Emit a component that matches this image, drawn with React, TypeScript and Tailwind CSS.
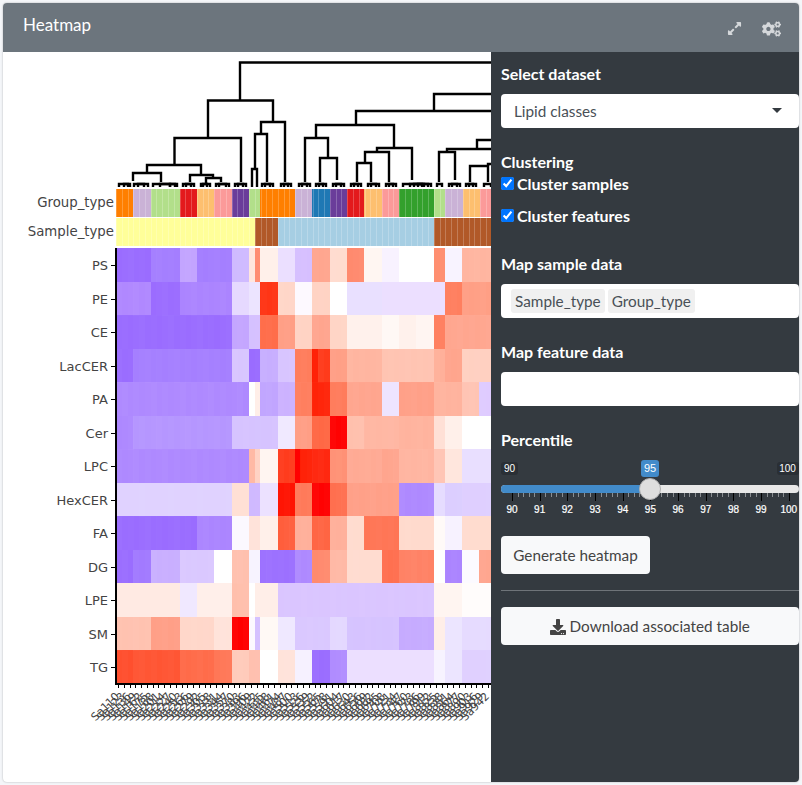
import { FaCogs, FaDownload, FaExpandAlt } from "react-icons/fa";

const HEAT_LEFT = 116;
const HEAT_RIGHT = 491;
const COL = 5.78;
const ROW_TOP = 248;
const ROW_H = 33.5;

// "end:colour" runs per row, x in page pixels
const rows: [string, string][] = [
  ["PS", "151:9a6cff 180:a47eff 197:c3a4ff 232:a47eff 249:cfbaff 255:ffe6de 260:ff8a70 278:fff0ea 295:ebdfff 312:d6bfff 330:ffa68f 347:ffdccf 364:ff8a6e 382:fff6f2 399:f8f2ff 434:ffffff 445:ff8f70 462:f8f3ff 491:ffb5a0"],
  ["PE", "151:b088ff 180:9b6cff 232:ab84ff 249:e6d9ff 260:ece4ff 278:ff3515 295:ffd6c8 312:fdf9ff 330:ffd3c4 347:ffffff 382:e9e0ff 445:ecdfff 462:ff7e5e 491:ff9f85"],
  ["CE", "232:9a6cff 249:c4a6ff 260:d5c0ff 278:ff6d4a 295:ff9e85 312:ffd3c4 330:ffa58e 347:ffd5c6 382:fff1ec 399:fff8f5 416:fff1ec 434:fff5f2 445:ff7f5f 491:ffa68f"],
  ["LacCER", "133:9a6cff 232:a57fff 249:d8c5ff 260:9a6cff 278:c7aeff 295:d8c5ff 312:ff7d5c 318:ff1f05 330:ff3a1a 347:ff9f86 382:ffb5a0 434:ffc4b2 445:ffb09a 462:ffa58d 491:ffd0c1"],
  ["PA", "249:ae89ff 255:ffffff 260:ffeee8 278:c1a5ff 295:ccb2ff 312:ff7e5e 330:ff2308 347:ff7c5c 382:ffa58e 399:eee4ff 434:ffa088 462:ffb39e 479:ffc4b3 491:dfcbff"],
  ["Cer", "133:ad88ff 232:b596ff 278:d6c3ff 295:f0e9ff 312:ff9e85 330:ff6845 347:ff0000 364:ffc0ad 399:ffb7a3 434:ffb39e 445:ffe0d6 462:fff0ea 491:ffffff"],
  ["LPC", "249:ae89ff 255:ffb8a3 260:ffd2c4 278:fff5f1 295:ff3b1c 300:ff0000 312:ff1f05 330:ff2810 347:ff9175 382:ffaa94 399:ffa58e 434:ffb5a1 445:ffc5b5 462:ffe6dd 491:e9dfff"],
  ["HexCER", "232:e0d2ff 249:ffe0d5 260:cfb8ff 278:ece1ff 295:ff1200 312:ff7a5a 330:ff0000 347:ff6f4f 399:ffa088 434:ae89ff 445:e6dcff 462:dcceff 491:dfcfff"],
  ["FA", "197:9a6cff 232:ab85ff 249:fbf8ff 260:ffe3da 278:fff0ea 295:ff5e3c 312:ffb09b 330:ff6442 347:ffb09b 364:ffdccf 399:ff7555 434:ffdacd 445:fffaf8 462:f7f2ff 491:ffdccf"],
  ["DG", "133:9a6cff 151:a27aff 180:c9afff 214:dac8ff 232:ffffff 249:ffc0ae 260:f7f3ff 295:9c70ff 312:ae89ff 330:ff8a6e 347:ffb9a6 382:ffdcd0 399:ff6f4f 434:ff8265 445:ffffff 462:ab84ff 479:fcfaff 491:ffa68f"],
  ["LPE", "180:ffeae3 197:f0e8ff 232:ffefea 249:ffbfac 255:ffffff 278:ffeee8 434:dac5ff 462:fff5f1 491:fffcfb"],
  ["SM", "151:ffc2b0 180:ff9f87 214:ffd7ca 232:ffe3da 249:ff0000 255:fcf9ff 260:d5c1ff 278:fff9f5 295:efe8ff 330:dac8ff 347:e4d8ff 399:d6c3ff 434:c6abff 445:ffeee8 462:ece5ff 491:e6dbff"],
  ["TG", "133:ff4f2e 180:ff5533 214:ff6b49 232:ff7757 249:ffcbbb 260:ffbfae 278:ffffff 295:ffe3da 312:f6f1ff 330:9a6cff 347:b08cff 434:ecdfff 445:f7f3ff 462:ece5ff 491:e0d0ff"],
];

const groupRuns = "133:ff7f00 151:cab2d6 180:b2df8a 197:e31a1c 214:fdbf6f 232:fb9a99 249:6a3d9a 260:b2df8a 295:ff7f00 312:cab2d6 330:1f78b4 347:6a3d9a 364:e31a1c 382:fdbf6f 399:fb9a99 434:33a02c 445:b2df8a 463:cab2d6 480:fdbf6f 491:fb9a99";
const sampleRuns = "255:ffff99 278:b15928 434:a6cee3 491:b15928";

// [x1, x2, y, leftEnd, rightEnd]
const branches: [number, number, number, number, number][] = [
  [240, 491, 62.5, 100, 62],
  [208, 273, 100.5, 138, 122],
  [174.5, 241, 138, 165, 182],
  [147, 201, 165, 173, 175],
  [133, 161, 173, 181, 182],
  [190, 213, 175, 182, 178],
  [206, 221, 178, 183, 182],
  [261, 285, 122, 134, 182],
  [255, 267, 134, 169, 182],
  [252, 257, 169, 187, 187],
  [434, 491, 94, 111, 94],
  [356, 491, 111, 125, 111],
  [316, 394, 125, 138, 148],
  [305, 328, 138, 182, 158],
  [320, 337, 158, 182, 180],
  [377, 412, 148, 152, 180],
  [365, 389, 152, 163, 182],
  [357, 371, 163, 182, 182],
  [447, 491, 149, 152, 149],
  [439, 455, 152, 182, 180],
  [477, 491, 140, 148, 140],
  [470, 488, 166, 182, 182],
  [488, 491, 164, 166, 164],
];

// small arches sitting right on top of the annotation bars
const arches: [number, number][] = [
  [119, 130], [124, 128], [134, 148], [138, 144], [153, 170], [160, 175], [170, 177],
  [183, 194], [186, 191], [201, 210], [203, 207], [216, 229], [219, 226],
  [235, 246], [238, 243], [262, 273], [265, 270], [281, 291], [284, 288],
  [299, 310], [302, 307], [316, 326], [319, 323], [333, 344], [336, 341],
  [351, 361], [354, 358], [368, 379], [371, 376], [386, 396], [389, 393],
  [403, 431], [410, 428], [414, 424], [418, 422], [437, 442], [449, 460], [452, 457],
  [466, 476], [469, 473], [484, 491],
];

function runs(spec: string, start: number) {
  let x = start;
  return spec.split(" ").map((part) => {
    const [end, colour] = part.split(":");
    const cell = { x, w: Number(end) - x, fill: "#" + colour };
    x = Number(end);
    return cell;
  });
}

const columns = Array.from({ length: 65 }, (_, i) => HEAT_LEFT + i * COL);

function Heatmap() {
  return (
    <svg viewBox="3 52 488 730" className="block w-[488px] h-[730px]" fontFamily="'DejaVu Sans', sans-serif" fontSize="13.3" fill="#444">
      {/* dendrogram */}
      <g fill="none" stroke="#000" strokeWidth="2.4">
        {branches.map(([x1, x2, y, a, b], i) => (
          <path key={i} d={`M${x1} ${a}V${y}H${x2}V${b}`} />
        ))}
        {arches.map(([x1, x2], i) => (
          <path key={i} d={`M${x1} 187V184H${x2}V187`} />
        ))}
      </g>

      {/* annotation bars */}
      <text x="114" y="207" textAnchor="end">Group_type</text>
      <text x="114" y="236" textAnchor="end">Sample_type</text>
      <g shapeRendering="crispEdges">
        {runs(groupRuns, HEAT_LEFT).map((c, i) => (
          <rect key={i} x={c.x} y="189" width={c.w} height="28" fill={c.fill} />
        ))}
        {runs(sampleRuns, HEAT_LEFT).map((c, i) => (
          <rect key={i} x={c.x} y="218" width={c.w} height="28" fill={c.fill} />
        ))}
        {columns.map((x, i) => (
          <rect key={i} x={Math.round(x)} y="189" width="1" height="57" fill="#fff" opacity="0.22" />
        ))}
      </g>

      {/* heat cells */}
      <g shapeRendering="crispEdges">
        {rows.map(([name, spec], r) =>
          runs(spec, HEAT_LEFT).map((c, i) => (
            <rect key={name + i} x={c.x} y={Math.round(ROW_TOP + r * ROW_H)} width={c.w} height={34} fill={c.fill} />
          ))
        )}
        {/* faint column-to-column variation */}
        {rows.map(([name], r) =>
          columns.map((x, i) => (
            <rect
              key={name + i}
              x={Math.round(x)}
              y={Math.round(ROW_TOP + r * ROW_H)}
              width="6"
              height="34"
              fill="#fff"
              opacity={((r * 13 + i * 7) % 5) * 0.007}
            />
          ))
        )}
        <rect x="115" y="248" width="1.5" height="436" fill="#000" />
        <rect x="115" y="683" width={HEAT_RIGHT - 115} height="1.5" fill="#000" />
        {rows.map(([name], r) => (
          <rect key={name} x="111" y={Math.round(ROW_TOP + r * ROW_H + 17)} width="4" height="1" fill="#000" />
        ))}
        {columns.map((x, i) => (
          <rect key={i} x={Math.round(x + 2)} y="684" width="1" height="4" fill="#000" />
        ))}
      </g>
      {rows.map(([name], r) => (
        <text key={name} x="108" y={ROW_TOP + r * ROW_H + 22} textAnchor="end" fontSize="13">{name}</text>
      ))}

      {/* sample names, overlapping as in the plot */}
      <g fontSize="11">
        {columns.map((x, i) => (
          <text key={i} x={x + 4} y="697" textAnchor="end" transform={`rotate(-45 ${x + 4} 697)`}>
            {"Sa" + (110 + i * 13)}
          </text>
        ))}
      </g>
    </svg>
  );
}

function FieldLabel({ children, className }: { children: string; className: string }) {
  return <div className={"text-white font-bold text-[16px] leading-[18px] " + className}>{children}</div>;
}

function Check({ label, className }: { label: string; className: string }) {
  return (
    <label className={"flex items-center h-[20px] text-white font-bold text-[16px] " + className}>
      <input type="checkbox" defaultChecked className="w-[13px] h-[13px] m-0 mr-[3px] accent-[#0075ff]" />
      {label}
    </label>
  );
}

function Tag({ children }: { children: string }) {
  return <span className="h-[24px] px-[4px] rounded-[3px] bg-[#f0f0f0] leading-[24px]">{children}</span>;
}

const TICK_X0 = 21;
const TICK_STEP = 27.68;

function Slider() {
  return (
    <div className="relative mt-[11px] h-[74px] w-[297.5px] font-['Liberation_Sans',sans-serif]">
      <span className="absolute left-0 top-[2px] h-[13px] w-[17px] rounded-[3px] bg-[#2a2f35] text-center text-[10px] leading-[13px] text-white">90</span>
      <span className="absolute left-[140px] top-0 h-[17px] w-[18px] rounded-[3px] bg-[#428bca] text-center text-[11px] leading-[17px] text-white">95</span>
      <span className="absolute right-0 top-[2px] h-[13px] w-[22px] rounded-[3px] bg-[#2a2f35] text-center text-[10px] leading-[13px] text-white">100</span>
      <div className="absolute left-0 right-0 top-[25px] h-[8px] rounded-full bg-[#e8e8e8]" />
      <div className="absolute left-0 top-[25px] h-[8px] w-[149px] rounded-l-full bg-[#428bca]" />
      <svg viewBox="0 0 297 42" className="absolute left-0 top-[33px] w-[297px] h-[42px]" fontSize="10">
        {Array.from({ length: 51 }, (_, i) => {
          const x = TICK_X0 - 10 + (i * TICK_STEP) / 5;
          const major = i % 5 === 0;
          return <rect key={i} x={x} y="0" width="1" height={major ? 8 : 4} fill={major ? "#000" : "#8a8e92"} shapeRendering="crispEdges" />;
        })}
        {Array.from({ length: 11 }, (_, i) => (
          <text key={i} x={TICK_X0 - 10 + i * TICK_STEP} y="20" textAnchor="middle" fill="#fff" stroke="#fff" strokeWidth="0.2">{90 + i}</text>
        ))}
      </svg>
      <div className="absolute left-[138px] top-[18px] h-[22px] w-[22px] rounded-full border border-[#b0b0b0] bg-[#dedede]" />
    </div>
  );
}

export default function App() {
  return (
    <div className="h-[785px] bg-[#f4f6f9] p-[3px] font-['Lato',sans-serif]">
      <div className="w-[795.5px] h-[779px] rounded-[4px] overflow-hidden bg-white shadow-[0_0_2px_rgba(0,0,0,0.3)]">
        <header className="flex items-center h-[49px] pl-[20px] pr-[18px] bg-[#6c757d] text-white">
          <h1 className="text-[17px] leading-[40px] pb-[5px] flex-1">Heatmap</h1>
          <FaExpandAlt className="w-[15px] h-[15px] mt-[2px] text-[#d5d8db]" />
          <FaCogs className="w-[19px] h-[16px] mt-[2px] ml-[20px] text-[#d5d8db]" />
        </header>
        <div className="flex">
          <Heatmap />
          <aside className="w-[307.5px] h-[730px] bg-[#343a40] pl-[10px] pt-[13px]">
            <FieldLabel className="">Select dataset</FieldLabel>
            <div className="flex items-center justify-between mt-[11px] h-[33.5px] pl-[13px] pr-[17px] rounded-[4px] bg-white text-[#495057] text-[15.3px]">
              <span className="pt-[2px]">Lipid classes</span>
              <span className="w-0 h-0 border-x-[5px] border-t-[5px] border-x-transparent border-t-[#343a40]" />
            </div>
            <FieldLabel className="mt-[25px]">Clustering</FieldLabel>
            <Check label="Cluster samples" className="mt-[3px]" />
            <Check label="Cluster features" className="mt-[12px]" />
            <FieldLabel className="mt-[29px]">Map sample data</FieldLabel>
            <div className="flex items-center gap-[3px] mt-[11px] h-[34px] pl-[10px] rounded-[4px] bg-white text-[#495057] text-[15.3px]">
              <Tag>Sample_type</Tag>
              <Tag>Group_type</Tag>
            </div>
            <FieldLabel className="mt-[25px]">Map feature data</FieldLabel>
            <div className="mt-[11px] h-[34px] rounded-[4px] bg-white" />
            <FieldLabel className="mt-[25px]">Percentile</FieldLabel>
            <Slider />
            <button className="block mt-[2px] pt-[2px] h-[38px] w-[149px] rounded-[4px] bg-[#f8f9fa] text-[#444] text-[15.3px]">Generate heatmap</button>
            <hr className="mt-[16px] border-t border-[#6f7479]" />
            <button className="flex items-center justify-center gap-[4px] mt-[16px] pt-[2px] h-[38px] w-full rounded-[4px] bg-[#f8f9fa] text-[#444] text-[15.3px]">
              <FaDownload className="w-[16px] h-[16px]" />
              Download associated table
            </button>
          </aside>
        </div>
      </div>
    </div>
  );
}
